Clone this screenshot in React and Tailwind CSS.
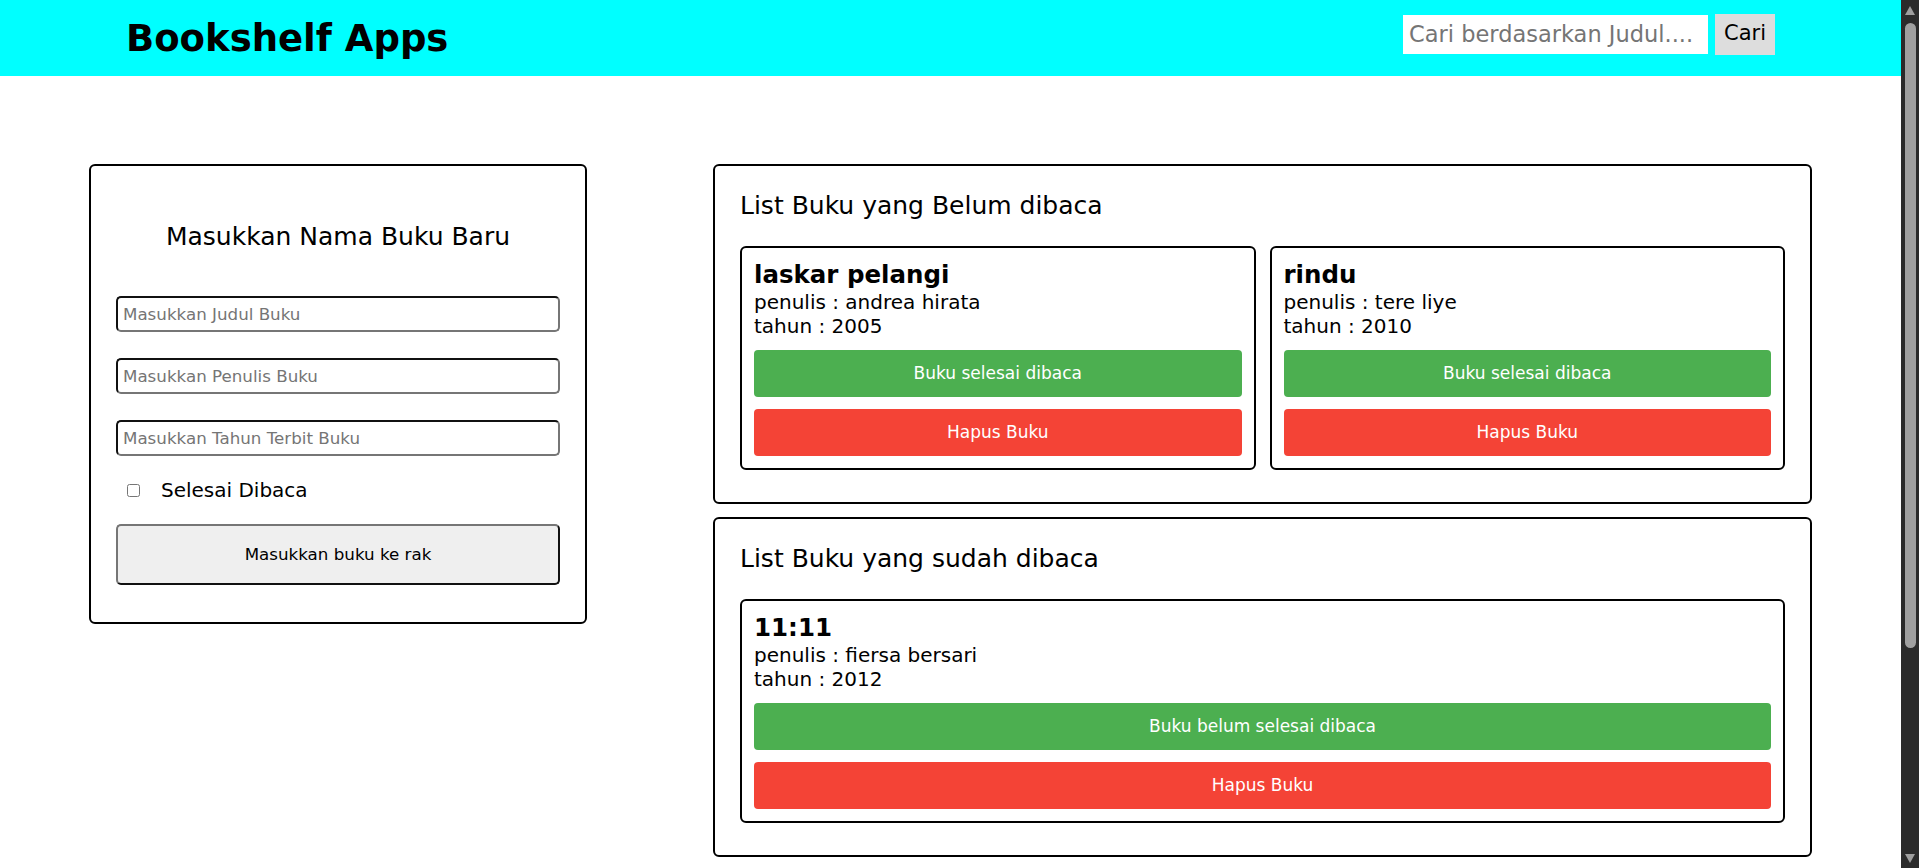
import { useState } from "react";

const belumDibaca = [
  { id: 1, title: "laskar pelangi", author: "andrea hirata", year: 2005 },
  { id: 2, title: "rindu", author: "tere liye", year: 2010 },
];

const sudahDibaca = [
  { id: 3, title: "11:11", author: "fiersa bersari", year: 2012 },
];

function BookCard({ book, done }) {
  return (
    <article className="rounded-[6px] border-2 border-black p-[12px]">
      <h3 className="text-[24.5px] font-bold leading-[30px]">{book.title}</h3>
      <p className="text-[20px] leading-[24px]">penulis : {book.author}</p>
      <p className="text-[20px] leading-[24px]">tahun : {book.year}</p>
      <button className="mt-[12px] h-[47px] w-full rounded-[4px] bg-[#4caf50] text-[17px] text-white">
        {done ? "Buku belum selesai dibaca" : "Buku selesai dibaca"}
      </button>
      <button className="mt-[12px] h-[47px] w-full rounded-[4px] bg-[#f44336] text-[17px] text-white">
        Hapus Buku
      </button>
    </article>
  );
}

function Shelf({ title, books, done, cols }) {
  return (
    <section className="rounded-[6px] border-2 border-black px-[25px] pb-[32px] pt-[25px]">
      <h2 className="mb-[25px] text-[25px] leading-[30px]">{title}</h2>
      <div className={cols === 2 ? "grid grid-cols-2 gap-[14px]" : "grid grid-cols-1 gap-[14px]"}>
        {books.map((book) => (
          <BookCard key={book.id} book={book} done={done} />
        ))}
      </div>
    </section>
  );
}

const inputClass =
  "h-[36px] w-full rounded-[5px] border-2 border-t-[#111] border-l-[#111] border-r-[#767676] border-b-[#767676] px-[5px] text-[16.7px] outline-none placeholder:text-[#757575]";

export default function App() {
  const [selesai, setSelesai] = useState(false);

  return (
    <div className="flex h-[868px] w-full overflow-hidden bg-white font-['DejaVu_Sans',sans-serif] text-black">
      <div className="min-w-0 flex-1">
        {/* Header */}
        <header className="flex h-[76px] items-center justify-between bg-[#00ffff] px-[126px]">
          <h1 className="text-[37px] font-bold leading-none">Bookshelf Apps</h1>
          <form className="mb-[8px] flex items-center gap-[7px]" onSubmit={(e) => e.preventDefault()}>
            <input
              type="text"
              placeholder="Cari berdasarkan Judul...."
              className="h-[39px] w-[305px] bg-white px-[6px] text-[22.5px] outline-none placeholder:text-[#757575]"
            />
            <button className="h-[41px] w-[60px] bg-[#dddddd] text-[21px]">Cari</button>
          </form>
        </header>

        {/* Content */}
        <main className="flex items-start gap-[126px] px-[89px] pt-[88px]">
          <section className="w-[498px] shrink-0 rounded-[6px] border-2 border-black px-[25px] pb-[37px] pt-[56px]">
            <h2 className="text-center text-[25px] leading-[30px]">Masukkan Nama Buku Baru</h2>
            <form className="mt-[44px] flex flex-col" onSubmit={(e) => e.preventDefault()}>
              <div className="flex flex-col gap-[26px]">
                <input type="text" placeholder="Masukkan Judul Buku" className={inputClass} />
                <input type="text" placeholder="Masukkan Penulis Buku" className={inputClass} />
                <input type="text" placeholder="Masukkan Tahun Terbit Buku" className={inputClass} />
              </div>
              <label className="mt-[22px] flex h-[24px] items-center">
                <input
                  type="checkbox"
                  checked={selesai}
                  onChange={(e) => setSelesai(e.target.checked)}
                  className="ml-[11px] h-[13px] w-[13px]"
                />
                <span className="ml-[21px] text-[20px]">Selesai Dibaca</span>
              </label>
              <button className="mt-[22px] h-[61px] w-full rounded-[5px] border-2 border-t-[#767676] border-l-[#767676] border-r-[#111] border-b-[#111] bg-[#efefef] text-[16.7px]">
                Masukkan buku ke rak
              </button>
            </form>
          </section>

          <div className="flex min-w-0 flex-1 flex-col gap-[13px]">
            <Shelf title="List Buku yang Belum dibaca" books={belumDibaca} done={false} cols={2} />
            <Shelf title="List Buku yang sudah dibaca" books={sudahDibaca} done cols={1} />
          </div>
        </main>
      </div>

      {/* Scrollbar */}
      <div className="flex w-[18px] shrink-0 flex-col items-center bg-[#2b2b2b] pb-[5px] pt-[6px]">
        <div className="h-0 w-0 border-x-[5px] border-b-[9px] border-x-transparent border-b-[#9e9e9e]" />
        <div className="mt-[8px] h-[625px] w-[11px] rounded-full bg-[#a0a0a0]" />
        <div className="flex-1" />
        <div className="h-0 w-0 border-x-[5px] border-t-[9px] border-x-transparent border-t-[#9e9e9e]" />
      </div>
    </div>
  );
}
